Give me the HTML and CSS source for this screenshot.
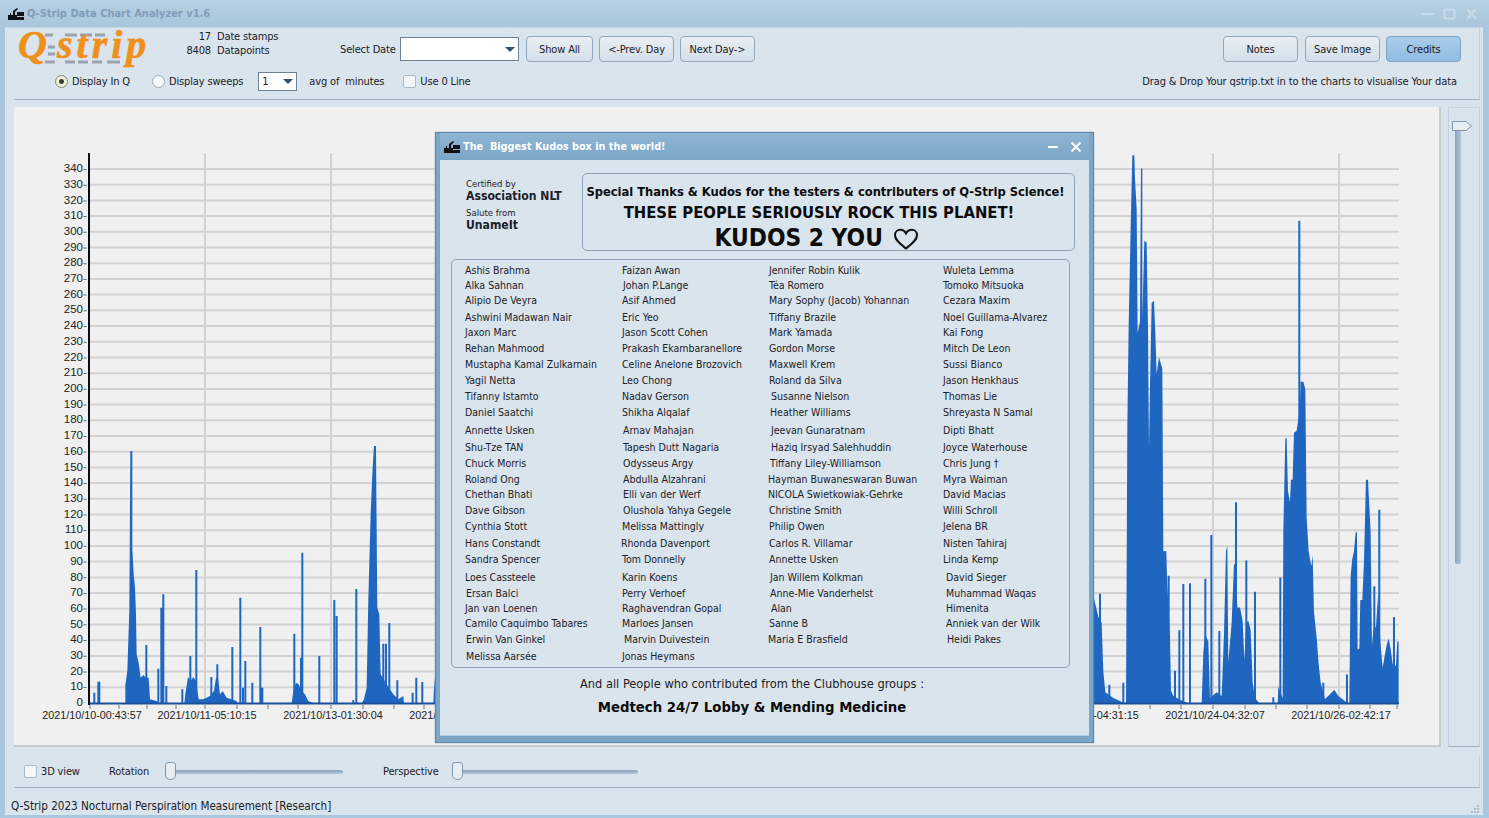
FILE: index.html
```html
<!DOCTYPE html>
<html lang="en">
<head>
    <meta charset="UTF-8">
    <meta name="viewport" content="width=device-width, initial-scale=1.0">
    <title>Q-Strip Data Chart Analyzer v1.6</title>
    <link rel="stylesheet" href="styles.css">
</head>
<body>
<div class="window">
    <div class="titlebar">
        <svg class="appicon" width="16" height="12" viewBox="0 0 16 12"><path d="M0 12V7h2V5h1v2h2V3l4-3 1 1-3 3v3h2V4h7v4H9v1h7v3z" fill="#111"/></svg>
        <span class="apptitle">Q-Strip Data Chart Analyzer v1.6</span>
        <div class="winbtns">
            <svg width="13" height="12" viewBox="0 0 13 12"><path d="M0 6h13" stroke="#c9dbe8" stroke-width="2"/></svg>
            <svg width="13" height="12" viewBox="0 0 13 12"><rect x="1.500" y="1.500" width="10" height="9" rx="1" fill="none" stroke="#c9dbe8" stroke-width="2"/></svg>
            <svg width="13" height="12" viewBox="0 0 13 12"><path d="M2 1l9 10M11 1L2 11" stroke="#c9dbe8" stroke-width="2"/></svg>
        </div>
    </div>

    <div class="panel">
        <div class="toolbar">
            <div class="row1">
                <svg class="logo" width="144" height="54" viewBox="0 -9 144 54">
                    <path d="M29 4h8M49 4h12M64 4h12M79 4h10M32 16h7M32 23h7M29 31h10M49 31h10M62 31h10M76 31h10M91 31h13" stroke="#9aa3ac" stroke-width="3"/>
                    <text class="logo-txt" x="2" y="27">Q</text>
                    <text class="logo-txt strip" x="41" y="27">strip</text>
                </svg>
                <div class="stats">
                    <span class="num">17</span><span>Date stamps</span>
                    <span class="num">8408</span><span>Datapoints</span>
                </div>
                <span class="sel-label">Select Date</span>
                <div class="combo date"><span></span><i class="arrow"></i></div>
                <button class="btn show">Show All</button>
                <button class="btn">&lt;-Prev. Day</button>
                <button class="btn">Next Day-&gt;</button>
                <div class="spacer"></div>
                <button class="btn notes">Notes</button>
                <button class="btn">Save Image</button>
                <button class="btn active">Credits</button>
            </div>
            <div class="row2">
                <label class="radio on"><i></i>Display In Q</label>
                <label class="radio"><i></i>Display sweeps</label>
                <div class="combo mins"><span>1</span><i class="arrow"></i></div>
                <span class="avg">avg of&nbsp; minutes</span>
                <label class="check zero"><i></i>Use 0 Line</label>
                <div class="spacer"></div>
                <span class="hint">Drag &amp; Drop Your qstrip.txt in to the charts to visualise Your data</span>
            </div>
        </div>

        <div class="middle">
            <div class="chart">
                <svg width="1425" height="638" viewBox="14 106 1425 638">
                    <path class="grid" d="M89 686.3H1399M89 670.6H1399M89 654.9H1399M89 639.2H1399M89 623.5H1399M89 607.8H1399M89 592.1H1399M89 576.4H1399M89 560.6H1399M89 544.9H1399M89 529.2H1399M89 513.5H1399M89 497.8H1399M89 482.1H1399M89 466.4H1399M89 450.7H1399M89 435H1399M89 419.3H1399M89 403.6H1399M89 387.9H1399M89 372.2H1399M89 356.5H1399M89 340.8H1399M89 325.1H1399M89 309.3H1399M89 293.6H1399M89 277.9H1399M89 262.2H1399M89 246.5H1399M89 230.8H1399M89 215.1H1399M89 199.4H1399M89 183.7H1399M89 168H1399"/>
                    <path class="grid" d="M205 152V702M331 152V702M457 152V702M1213 152V702M1339 152V702"/>

                    <g class="ylabels">
                        <text x="83" y="705">0</text><text x="83" y="689">10</text><text x="83" y="674">20</text><text x="83" y="658">30</text><text x="83" y="642">40</text><text x="83" y="627">50</text><text x="83" y="611">60</text><text x="83" y="595">70</text><text x="83" y="580">80</text><text x="83" y="564">90</text><text x="83" y="548">100</text><text x="83" y="532">110</text><text x="83" y="517">120</text><text x="83" y="501">130</text><text x="83" y="485">140</text><text x="83" y="470">150</text><text x="83" y="454">160</text><text x="83" y="438">170</text><text x="83" y="422">180</text><text x="83" y="407">190</text><text x="83" y="391">200</text><text x="83" y="375">210</text><text x="83" y="360">220</text><text x="83" y="344">230</text><text x="83" y="328">240</text><text x="83" y="312">250</text><text x="83" y="297">260</text><text x="83" y="281">270</text><text x="83" y="265">280</text><text x="83" y="250">290</text><text x="83" y="234">300</text><text x="83" y="218">310</text><text x="83" y="203">320</text><text x="83" y="187">330</text><text x="83" y="171">340</text>
                    </g>

                    <!-- left half, traced from a crop -->
                    <g transform="translate(40 400) scale(.3333)">
                        <path class="area" d="M256 906V852L262 810 268 630 271 150H277V440L281 520 285 560 288 640 290 760 296 785 302 830 310 822 318 830 326 830 330 895 350 900 356 906Z"/>
                        <path class="area" d="M433 906 436 880 444 828 452 840 460 828 468 840 476 895 490 895 510 885 522 870 528 830 534 830 540 880 548 870 560 890 590 900 592 906Z"/>
                        <path class="area" d="M755 906 760 870 768 845 776 850 784 870 795 880 805 900 820 906Z"/>
                        <path class="area" d="M966 906 972 895 980 860 985 600 992 340 998 200 1002 135 1008 135 1012 620 1018 640 1022 820 1040 850 1060 880 1075 895 1090 885 1092 906Z"/>
                        <path class="area" d="M1180 906 1182 865 1186 815 1190 906Z"/>
                        <path class="spike" d="M163 906V875M175 906V842M178 906V842M319 906V732M355 906V803M364 906V620M370 906V580M379 906V855M427 906V865M451 906V765M469 906V507M514 906V828M532 906V790M577 906V738M601 906V590M609 906V860M616 906V780M637 906V845M661 906V678M667 906V860M763 906V698M783 906V770M787 906V455M838 906V765M883 906V597M890 906V645M940 906V897M949 906V564M1030 906V728M1038 906V728M1048 906V666M1072 906V838M1118 906V875M1129 906V830M1147 906V843"/>
                    </g>
                    <!-- right half, this crop came back squashed so y differs -->
                    <g transform="translate(1090 140) scale(.3333 .3763)">
                        <path class="area" d="M12 1496V1215L25 1265 35 1280 40 1410 46 1465 70 1480 90 1488 107 1496Z"/>
                        <path class="area" d="M108 1496 112 760 116 490 122 230 127 38H133L135 100 140 180 143 510 150 480 153 73H157V470L163 265 170 270 174 500 177 820 180 650 185 430 192 425 196 510 200 620 207 575 217 605 220 1090H228L232 1180 240 1320 243 1460 250 1475 270 1485 300 1496Z"/>
                        <path class="area" d="M335 1496 340 1360 345 1310 355 1330 360 1480 380 1465 395 1475 402 1310 408 1090 412 1075 415 1385 425 1280 432 1125 436 1125 442 1240 450 1240 458 1275 463 1380 469 1280 475 1275 482 1300 488 1440 495 1480 510 1496Z"/>
                        <path class="area" d="M563 1496 565 1450 578 1480 580 1040 586 790H590L594 930 600 960 603 900H608L612 775 620 770 625 740 630 700 632 640H640L646 660 650 1000 656 1090 664 1130 668 1100 672 1250 680 1320 686 1390 692 1440 705 1483 720 1470 733 1458 745 1475 760 1485 775 1496Z"/>
                        <path class="area" d="M778 1496 782 1155 787 1110 792 1090 797 1040H801L803 1350H808L811 1220H817L822 1120 828 900H834L842 1040 846 1340 850 1300 858 1290 865 1200 871 1330 878 1400 890 1340 896 1322 902 1350 908 1390 918 1395 922 1330H926V1496Z"/>
                        <path class="spike" d="M30 1496V1203M58 1496V1445M100 1496V1440M226 1496V1090M236 1496V1155M255 1496V1408M268 1496V1300M280 1496V1177M300 1496V1175M346 1496V1163M364 1496V1047M388 1496V1302M438 1496V960M469 1496V1115M495 1496V1198M550 1496V1478M571 1496V1160M628 1496V212M700 1496V1440M771 1496V1418M853 1496V1183M868 1496V980M912 1496V1265"/>
                    </g>

                    <path class="baseline" d="M89 702.5H1399"/>
                    <path class="axis" d="M89 152V704"/>
                    <path class="ticks" d="M85 168V702"/>
                    <path class="xticks" d="M90 704v4M119 704v4M147 704v4M176 704v4M205 704v4M237 704v4M268 704v4M298 704v4M331 704v4M363 704v4M394 704v4M424 704v4M1119 704v4M1150 704v4M1181 704v4M1213 704v4M1245 704v4M1276 704v4M1307 704v4M1339 704v4M1370 704v4M1397 704v4"/>
                    <g class="xlabels">
                        <text x="92" y="718">2021/10/10-00:43:57</text>
                        <text x="207" y="718">2021/10/11-05:10:15</text>
                        <text x="333" y="718">2021/10/13-01:30:04</text>
                        <text x="459" y="718">2021/10/14-03:12:40</text>
                        <text x="1089" y="718">2021/10/22-04:31:15</text>
                        <text x="1215" y="718">2021/10/24-04:32:07</text>
                        <text x="1341" y="718">2021/10/26-02:42:17</text>
                    </g>
                </svg>
            </div>
            <div class="vside">
                <div class="vtrack"></div>
                <svg class="vthumb" width="22" height="12" viewBox="0 0 22 12"><path d="M1.500 1.500H15L20.500 6 15 10.500H1.500Z" fill="#e6edf3" stroke="#7f97ad"/></svg>
            </div>
        </div>

        <div class="bottom">
            <label class="check three"><i></i>3D view</label>
            <span class="rot-label">Rotation</span>
            <div class="hslider rot"><b></b></div>
            <span class="persp-label">Perspective</span>
            <div class="hslider persp"><b></b></div>
        </div>

        <div class="status">
            <span>Q-Strip 2023 Nocturnal Perspiration Measurement [Research]</span>
            <svg class="grip" width="10" height="10" viewBox="0 0 10 10"><path d="M7 1h2v2H7zM4 4h2v2H4zM7 4h2v2H7zM1 7h2v2H1zM4 7h2v2H4zM7 7h2v2H7z" fill="#aebcc9"/></svg>
        </div>
    </div>

    <div class="dialog">
        <div class="dlg-title">
            <svg class="appicon" width="16" height="12" viewBox="0 0 16 12"><path d="M0 12V7h2V5h1v2h2V3l4-3 1 1-3 3v3h2V4h7v4H9v1h7v3z" fill="#111"/></svg>
            <span class="dlg-name">The&nbsp; Biggest Kudos box in the world!</span>
            <svg class="dlg-btn" width="12" height="12" viewBox="0 0 12 12"><path d="M1 6h10" stroke="#fff" stroke-width="2"/></svg>
            <svg class="dlg-btn" width="12" height="12" viewBox="0 0 12 12"><path d="M1.500 1.500l9 9M10.500 1.500l-9 9" stroke="#fff" stroke-width="2"/></svg>
        </div>
        <div class="dlg-body">
            <div class="dlg-head">
                <div class="certs">
                    <div class="small">Certified by</div>
                    <div class="org">Association NLT</div>
                    <div class="small second">Salute from</div>
                    <div class="org">UnameIt</div>
                </div>
                <div class="thanks">
                    <div class="t1">Special Thanks &amp; Kudos for the testers &amp; contributers of Q-Strip Science!</div>
                    <div class="t2">THESE PEOPLE SERIOUSLY ROCK THIS PLANET!</div>
                    <div class="t3">KUDOS 2 YOU <svg class="heart" width="26" height="22" viewBox="0 0 26 22"><path d="M13 20.500C7 15.500 2 12 2 7.200 2 3.800 4.600 1.800 7.200 1.800 9.600 1.800 11.800 3.200 13 5.400 14.200 3.200 16.400 1.800 18.800 1.800 21.400 1.800 24 3.800 24 7.200 24 12 19 15.500 13 20.500Z" fill="none" stroke="#111" stroke-width="2"/></svg></div>
                </div>
            </div>

            <div class="names">
                <div class="r r15"><span>Ashis Brahma</span><span class="o1">Faizan Awan</span><span class="o1">Jennifer Robin Kulik</span><span>Wuleta Lemma</span></div>
                <div class="r r15"><span>Alka Sahnan</span><span class="o2">Johan P.Lange</span><span class="o1">Téa Romero</span><span>Tomoko Mitsuoka</span></div>
                <div class="r r17"><span>Alipio De Veyra</span><span class="o1">Asif Ahmed</span><span class="o1">Mary Sophy (Jacob) Yohannan</span><span>Cezara Maxim</span></div>
                <div class="r r15"><span>Ashwini Madawan Nair</span><span class="o1">Eric Yeo</span><span class="o1">Tiffany Brazile</span><span>Noel Guillama-Alvarez</span></div>
                <div class="r r16"><span>Jaxon Marc</span><span class="o1">Jason Scott Cohen</span><span class="o1">Mark Yamada</span><span>Kai Fong</span></div>
                <div class="r r16"><span>Rehan Mahmood</span><span class="o1">Prakash Ekambaranellore</span><span class="o1">Gordon Morse</span><span>Mitch De Leon</span></div>
                <div class="r r16"><span>Mustapha Kamal Zulkarnain</span><span class="o1">Celine Anelone Brozovich</span><span class="o1">Maxwell Krem</span><span>Sussi Bianco</span></div>
                <div class="r r16"><span>Yagil Netta</span><span class="o1">Leo Chong</span><span class="o1">Roland da Silva</span><span>Jason Henkhaus</span></div>
                <div class="r r16"><span>Tifanny Istamto</span><span class="o1">Nadav Gerson</span><span class="o3">Susanne Nielson</span><span>Thomas Lie</span></div>
                <div class="r r18"><span>Daniel Saatchi</span><span class="o1">Shikha Alqalaf</span><span class="o2">Heather Williams</span><span>Shreyasta N Samal</span></div>
                <div class="r r17"><span>Annette Usken</span><span class="o2">Arnav Mahajan</span><span class="o3">Jeevan Gunaratnam</span><span>Dipti Bhatt</span></div>
                <div class="r r16"><span>Shu-Tze TAN</span><span class="o2">Tapesh Dutt Nagaria</span><span class="o3">Haziq Irsyad Salehhuddin</span><span>Joyce Waterhouse</span></div>
                <div class="r r16"><span>Chuck Morris</span><span class="o2">Odysseus Argy</span><span class="o2">Tiffany Liley-Williamson</span><span>Chris Jung †</span></div>
                <div class="r r15"><span>Roland Ong</span><span class="o2">Abdulla Alzahrani</span><span>Hayman Buwaneswaran Buwan</span><span>Myra Waiman</span></div>
                <div class="r r16"><span>Chethan Bhati</span><span class="o2">Elli van der Werf</span><span>NICOLA Swietkowiak-Gehrke</span><span>David Macias</span></div>
                <div class="r r16"><span>Dave Gibson</span><span class="o2">Olushola Yahya Gegele</span><span class="o1">Christine Smith</span><span>Willi Schroll</span></div>
                <div class="r r17"><span>Cynthia Stott</span><span class="o1">Melissa Mattingly</span><span class="o1">Philip Owen</span><span>Jelena BR</span></div>
                <div class="r r16"><span>Hans Constandt</span><span>Rhonda Davenport</span><span class="o1">Carlos R. Villamar</span><span>Nisten Tahiraj</span></div>
                <div class="r r18"><span>Sandra Spencer</span><span class="o1">Tom Donnelly</span><span class="o1">Annette Usken</span><span>Linda Kemp</span></div>
                <div class="r r16"><span>Loes Cassteele</span><span class="o1">Karin Koens</span><span class="o2">Jan Willem Kolkman</span><span class="o3">David Sieger</span></div>
                <div class="r r15"><span class="o1">Ersan Balci</span><span class="o1">Perry Verhoef</span><span class="o2">Anne-Mie Vanderhelst</span><span class="o3">Muhammad Waqas</span></div>
                <div class="r r15"><span>Jan van Loenen</span><span class="o1">Raghavendran Gopal</span><span class="o3">Alan</span><span class="o3">Himenita</span></div>
                <div class="r r16"><span>Camilo Caquimbo Tabares</span><span class="o1">Marloes Jansen</span><span class="o1">Sanne B</span><span class="o3">Anniek van der Wilk</span></div>
                <div class="r r17"><span class="o1">Erwin Van Ginkel</span><span class="o3">Marvin Duivestein</span><span>Maria E Brasfield</span><span class="o4">Heidi Pakes</span></div>
                <div class="r r16"><span class="o1">Melissa Aarsée</span><span class="o1">Jonas Heymans</span></div>
            </div>

            <div class="also">And all People who contributed from the Clubhouse groups :</div>
            <div class="groups">Medtech 24/7 Lobby &amp; Mending Medicine</div>
        </div>
    </div>
</div>
</body>
</html>
```

FILE: styles.css
```css
*{
    padding: 0;
    margin: 0;
    box-sizing: border-box;
}
html,body{
    width: 1489px;
    height: 818px;
    overflow: hidden;
}
body{
    font-family: "DejaVu Sans", "Noto Sans", sans-serif;
    font-stretch: condensed;
    font-size: 11px;
    letter-spacing: -0.15px;
    color: #1c2026;
}
.window{
    position: relative;
    width: 1489px;
    height: 818px;
    display: flex;
    flex-direction: column;
    padding: 0 6px 3px 5px;
    background: #a9c6dc;
}
.titlebar{
    height: 27px;
    margin: 0 -6px 0 -5px;
    padding: 0 11px 0 8px;
    display: flex;
    align-items: center;
    background: linear-gradient(#b6d0e2, #a9c6dc);
}
.appicon{
    flex: none;
}
.apptitle{
    margin-left: 3px;
    font-size: 11px;
    font-weight: bold;
    letter-spacing: 0;
    color: #7f9db9;
}
.winbtns{
    margin-left: auto;
    display: flex;
    gap: 9px;
}

.panel{
    flex: 1;
    display: flex;
    flex-direction: column;
    padding-left: 9px;
    padding-right: 3px;
    background: #d9e4ed;
    border-top: 1px solid #c5d6e3;
}
.spacer{
    flex: 1;
}
.toolbar{
    height: 72px;
    padding-top: 3px;
    border-bottom: 1px solid #9fb2c3;
    border-right: 1px solid #c3d2de;
}
.row1{
    height: 36px;
    display: flex;
    align-items: center;
    padding-right: 18px;
}
.logo{
    margin-left: 2px;
    flex: none;
}
.logo-txt{
    font-family: "Liberation Serif", serif;
    font-style: italic;
    font-weight: bold;
    font-size: 40px;
    letter-spacing: 0;
    fill: #f0901c;
    stroke: #f0901c;
    stroke-width: .6;
}
.logo-txt.strip{
    letter-spacing: 4px;
}
.stats{
    width: 180px;
    display: grid;
    grid-template-columns: 51px auto;
    column-gap: 6px;
    justify-content: start;
    line-height: 14px;
    margin-top: -10px;
}
.num{
    text-align: right;
}
.sel-label{
    width: 60px;
}
.combo{
    position: relative;
    background: #fff;
    border: 1px solid #6e8296;
    display: flex;
    align-items: center;
    padding-left: 3px;
}
.combo.date{
    width: 119px;
    height: 24px;
}
.combo.mins{
    width: 39px;
    height: 19px;
    margin-left: 15px;
}
.arrow{
    position: absolute;
    right: 3px;
    top: 50%;
    margin-top: -2px;
    border-left: 5px solid transparent;
    border-right: 5px solid transparent;
    border-top: 5px solid #34506c;
}
.btn{
    width: 75px;
    height: 26px;
    margin-left: 6px;
    font: inherit;
    font-stretch: condensed;
    letter-spacing: -0.15px;
    color: #1c2026;
    border: 1px solid #93a8bb;
    border-radius: 4px;
    background: linear-gradient(#e9eff4, #d3dfe9);
}
.btn.show{
    width: 67px;
    margin-left: 7px;
}
.btn.notes{
    margin-right: 1px;
}
.btn.active{
    background: linear-gradient(#a9cdea, #8fbde2);
    border-color: #7ea3c4;
}
.row2{
    height: 22px;
    margin-top: 3px;
    padding-left: 41px;
    padding-right: 22px;
    display: flex;
    align-items: center;
}
.radio,.check{
    display: flex;
    align-items: center;
}
.radio i{
    width: 13px;
    height: 13px;
    margin-right: 4px;
    border: 1px solid #9aacbc;
    border-radius: 50%;
    background: #f4f6f8;
}
.radio + .radio{
    margin-left: 22px;
}
.radio.on i{
    background: radial-gradient(circle, #3a4030 0 2px, #eef2d8 3px);
    border-color: #7f8f70;
}
.check i{
    width: 13px;
    height: 13px;
    margin-right: 4px;
    background: #f4f7fa;
    border: 1px solid #a9bac9;
    border-radius: 2px;
}
.avg{
    margin-left: 12px;
}
.zero{
    margin-left: 19px;
}
.hint{
    letter-spacing: -0.1px;
}

.middle{
    height: 640px;
    margin-top: 7px;
    display: flex;
    gap: 7px;
}
.chart{
    width: 1427px;
    background: #f0f0f0;
    border-right: 2px solid #c9cccf;
    border-bottom: 2px solid #c9cccf;
}
.chart svg{
    display: block;
}
.grid{
    fill: none;
    stroke: #d2d2d2;
    stroke-width: 2;
}
.ylabels text{
    font-family: "Liberation Sans", sans-serif;
    font-size: 11.500px;
    letter-spacing: 0;
    text-anchor: end;
    fill: #222;
}
.xlabels text{
    font-family: "Liberation Sans", sans-serif;
    font-size: 10.800px;
    letter-spacing: 0;
    text-anchor: middle;
    fill: #222;
}
.area{
    fill: #1f66c1;
}
.spike{
    fill: none;
    stroke: #1f66c1;
    stroke-width: 6;
}
.baseline{
    stroke: #1a4f9c;
    stroke-width: 2;
}
.axis{
    fill: none;
    stroke: #0a0a14;
    stroke-width: 2;
}
.ticks{
    stroke: #666;
    stroke-width: 3;
    stroke-dasharray: 1 14.700;
}
.xticks{
    stroke: #777;
}
.vside{
    position: relative;
    width: 32px;
    border: 1px solid #c3d2de;
    border-bottom-color: #9fb2c3;
}
.vtrack{
    width: 6px;
    height: 442px;
    margin: 14px 0 0 6px;
    border-radius: 2px;
    background: linear-gradient(90deg, #8aa3be, #b3c7da);
}
.vthumb{
    position: absolute;
    left: 2px;
    top: 12px;
}

.bottom{
    height: 33px;
    margin-top: 8px;
    padding-left: 9px;
    display: flex;
    align-items: center;
    border: 1px solid transparent;
    border-right-color: #c3d2de;
    border-bottom-color: #9fb2c3;
}
.three{
    width: 85px;
}
.rot-label{
    width: 61px;
}
.persp-label{
    margin-left: 40px;
    width: 74px;
}
.hslider{
    position: relative;
    height: 4px;
    border-radius: 2px;
    background: linear-gradient(#8aa3be, #b3c7da);
}
.hslider.rot{
    width: 173px;
}
.hslider.persp{
    width: 181px;
}
.hslider b{
    position: absolute;
    left: -5px;
    top: -8px;
    width: 11px;
    height: 18px;
    background: #e6edf3;
    border: 1px solid #7f97ad;
    border-radius: 3px 3px 5px 5px;
}
.status{
    flex: 1;
    display: flex;
    align-items: center;
    justify-content: space-between;
    margin-left: -3px;
    padding-top: 9px;
    font-size: 11.600px;
    letter-spacing: 0;
}
.grip{
    margin: 6px 0 0 0;
}

/* credits dialog */
.dialog{
    position: absolute;
    left: 435px;
    top: 132px;
    width: 659px;
    height: 611px;
    display: flex;
    flex-direction: column;
    background: #7ba6c8;
    border: 1px solid #5d88ab;
    padding: 0 4px 6px 4px;
    box-shadow: 0 0 1px #5d88ab;
}
.dlg-title{
    height: 27px;
    display: flex;
    align-items: center;
    padding-left: 4px;
    padding-right: 7px;
    background: linear-gradient(#8fb6d3, #7ba6c8);
}
.dlg-name{
    margin-left: 3px;
    margin-right: auto;
    color: #fff;
    font-size: 10.800px;
    font-weight: bold;
    letter-spacing: 0;
}
.dlg-btn{
    margin-left: 11px;
}
.dlg-body{
    flex: 1;
    background: #d9e4ed;
    padding: 13px 19px 0 11px;
    border-bottom: 1px solid #b8d0e2;
    letter-spacing: 0;
}
.dlg-head{
    height: 78px;
    display: flex;
}
.certs{
    width: 131px;
    padding: 5px 0 0 15px;
}
.small{
    font-size: 9.500px;
    line-height: 12px;
}
.small.second{
    margin-top: 4px;
}
.org{
    font-size: 12.100px;
    font-weight: bold;
    line-height: 13px;
}
.thanks{
    flex: 1;
    margin-right: -5px;
    text-align: center;
    border: 1px solid #8da1b4;
    border-radius: 5px;
    font-weight: bold;
    padding-top: 9px;
    color: #0c0c0c;
    white-space: nowrap;
}
.t1{
    padding-right: 6px;
    font-size: 12.800px;
    line-height: 17px;
}
.t2{
    margin-top: 2px;
    padding-right: 19px;
    font-size: 16.500px;
    line-height: 21px;
}
.t3{
    padding-right: 24px;
    font-size: 24.300px;
    line-height: 30px;
}
.heart{
    vertical-align: -4px;
    margin-left: 2px;
}
.names{
    height: 409px;
    margin-top: 8px;
    padding: 3px 0 0 13px;
    border: 1px solid #8da1b4;
    border-radius: 5px;
    font-size: 10.500px;
}
.r{
    display: grid;
    grid-template-columns: 156px 147px 175px 1fr;
    line-height: 15px;
}
.r15{ height: 15px; }
.r16{ height: 16px; }
.r17{ height: 17px; }
.r18{ height: 18px; }
.o1{ padding-left: 1px; }
.o2{ padding-left: 2px; }
.o3{ padding-left: 3px; }
.o4{ padding-left: 4px; }
.also{
    margin-top: 7px;
    padding-right: 17px;
    text-align: center;
    font-size: 12.700px;
    line-height: 17px;
}
.groups{
    margin-top: 5px;
    padding-right: 17px;
    text-align: center;
    font-size: 14.750px;
    font-weight: bold;
    line-height: 20px;
    color: #0c0c0c;
}
```
